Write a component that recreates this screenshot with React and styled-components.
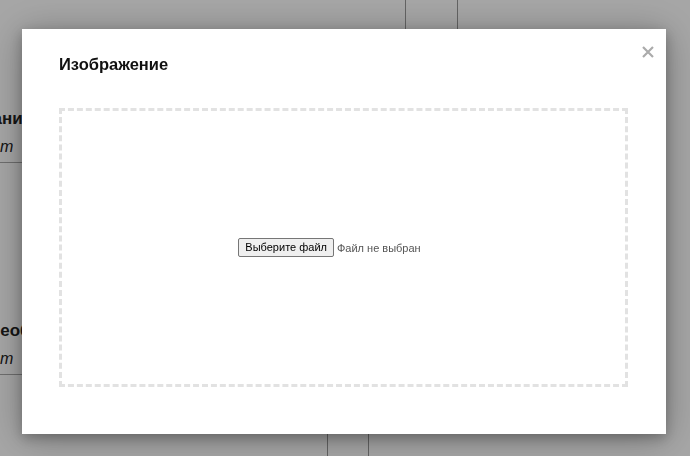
import React from 'react';
import styled, { createGlobalStyle } from 'styled-components';

const GlobalStyle = createGlobalStyle`
  html, body { margin: 0; padding: 0; height: 100%; background: #fff; overflow: hidden; }
  body { font-family: "Liberation Sans", Arial, sans-serif; color: #222; }
`;

function App() {
  return (
    <>
      <GlobalStyle />
      <Page>
        <List>
          <Item>
            <ItemTitle $shift={48}>Название</ItemTitle>
            <ItemSub>т</ItemSub>
          </Item>
          <Spacer />
          <Item>
            <ItemTitle $shift={12}>Необходимо</ItemTitle>
            <ItemSub>т</ItemSub>
          </Item>
        </List>
        <Columns>
          <DividerRow $left={405} $gap={51} $grow>
            <Divider />
            <Divider />
          </DividerRow>
          <DividerRow $left={327} $gap={40}>
            <Divider />
            <Divider />
          </DividerRow>
        </Columns>
      </Page>

      <Overlay>
        <Modal>
          <Close aria-label="Закрыть">
            <svg width="12" height="12" viewBox="0 0 12 12">
              <path d="M1 1 L11 11 M11 1 L1 11" stroke="#ababab" strokeWidth="2.2" />
            </svg>
          </Close>
          <Title>Изображение</Title>
          <DropZone>
            <FilePick>
              <FileButton type="button">Выберите файл</FileButton>
              <FileLabel>Файл не выбран</FileLabel>
            </FilePick>
          </DropZone>
        </Modal>
      </Overlay>
    </>
  );
}

export default App;

const Page = styled.div`
  position: relative;
  height: 456px;
  overflow: hidden;
`;

const List = styled.div`
  width: 200px;
  padding-top: 107px;
  display: flex;
  flex-direction: column;
`;

const Item = styled.div`
  height: 55px;
  border-bottom: 1px solid #aaa;
  display: flex;
  flex-direction: column;
  white-space: nowrap;
`;

const ItemTitle = styled.div`
  margin-left: ${p => -p.$shift}px;
  font-size: 17px;
  font-weight: bold;
  line-height: 24px;
`;

const ItemSub = styled.div`
  font-size: 16px;
  font-style: italic;
  font-family: "Liberation Sans", sans-serif;
  line-height: 32px;
`;

const Spacer = styled.div`
  height: 156px;
`;

const Columns = styled.div`
  position: absolute;
  inset: 0;
  display: flex;
  flex-direction: column;
  pointer-events: none;
`;

const DividerRow = styled.div`
  display: flex;
  gap: ${p => p.$gap}px;
  padding-left: ${p => p.$left}px;
  height: ${p => (p.$grow ? 'auto' : '40px')};
  flex: ${p => (p.$grow ? 1 : 'none')};
`;

const Divider = styled.div`
  width: 1px;
  background: #999;
`;

const Overlay = styled.div`
  position: fixed;
  inset: 0;
  background: rgba(0, 0, 0, 0.35);
  display: flex;
  align-items: flex-start;
  padding: 29px 0 0 22px;
`;

const Modal = styled.div`
  position: relative;
  width: 644px;
  height: 405px;
  box-sizing: border-box;
  background: #fff;
  padding: 25px 38px 47px 37px;
  display: flex;
  flex-direction: column;
  box-shadow: 0 4px 12px rgba(0, 0, 0, 0.25), 0 4px 36px rgba(0, 0, 0, 0.3);
`;

const Close = styled.button`
  position: absolute;
  top: 17px;
  right: 12px;
  border: 0;
  background: none;
  padding: 0;
  cursor: pointer;
  display: flex;
`;

const Title = styled.h2`
  margin: 0;
  font-size: 16.5px;
  font-weight: bold;
  line-height: 21px;
  color: #111;
`;

const DropZone = styled.div`
  margin-top: 33px;
  flex: 1;
  border: 3px dashed #e2e2e2;
  display: flex;
  align-items: center;
  justify-content: center;
`;

const FilePick = styled.div`
  display: flex;
  align-items: center;
  gap: 3px;
  margin-right: 28px;
  font-size: 11px;
`;

const FileButton = styled.button`
  font-family: "Liberation Sans", Arial, sans-serif;
  font-size: 11px;
  color: #000;
  background: #efefef;
  border: 1px solid #767676;
  border-radius: 2px;
  padding: 1px 6px;
  height: 19px;
  line-height: 15px;
`;

const FileLabel = styled.span`
  color: #555;
`;
